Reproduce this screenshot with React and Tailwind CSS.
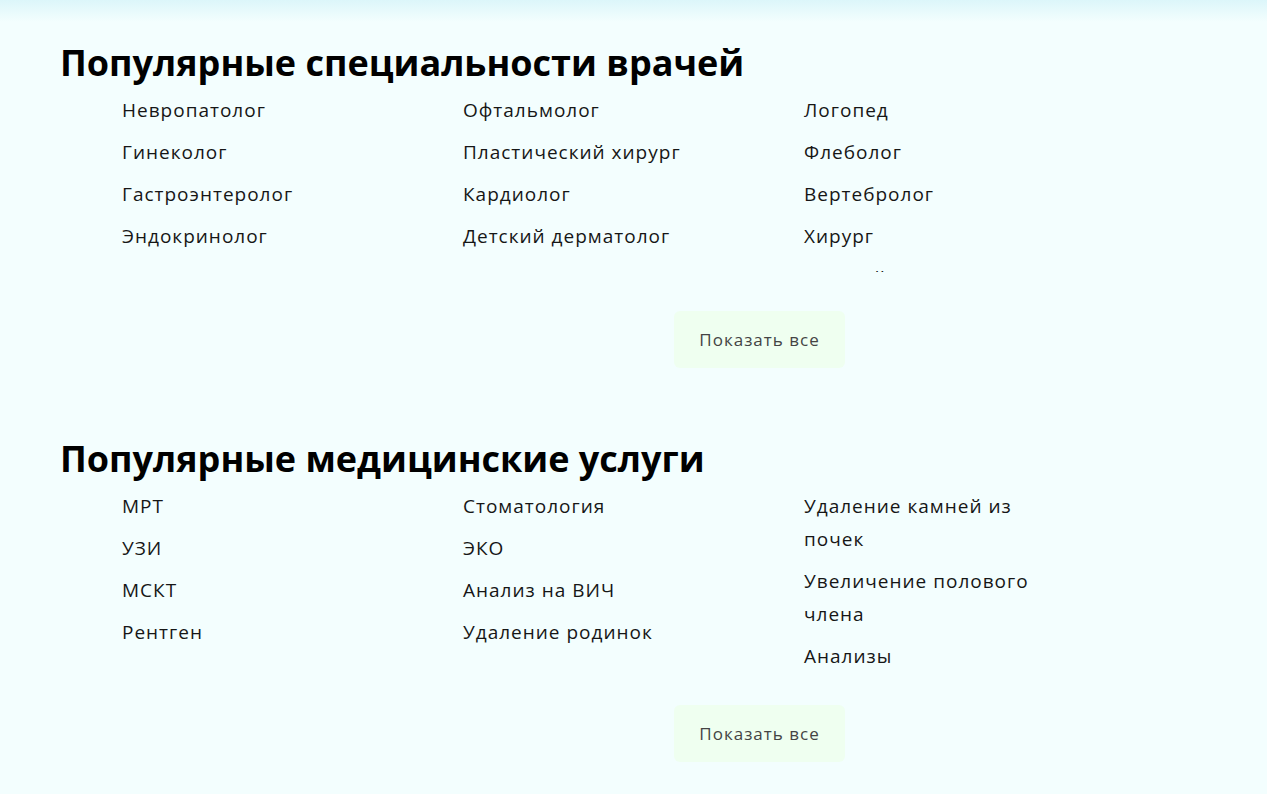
import React from 'react';

const specialties = [
  ['Невропатолог', 'Гинеколог', 'Гастроэнтеролог', 'Эндокринолог', 'Невролог', 'Уролог'],
  ['Офтальмолог', 'Пластический хирург', 'Кардиолог', 'Детский дерматолог', 'Маммолог', 'Терапевт'],
  ['Логопед', 'Флеболог', 'Вертебролог', 'Хирург', 'Детский хирург', 'Психолог'],
];

const services = [
  ['МРТ', 'УЗИ', 'МСКТ', 'Рентген'],
  ['Стоматология', 'ЭКО', 'Анализ на ВИЧ', 'Удаление родинок'],
  ['Удаление камней из почек', 'Увеличение полового члена', 'Анализы'],
];

function Section({ title, columns, clipped }) {
  return (
    <section className="pl-[60px]">
      <h2 className="text-[36px] leading-[44px] font-bold text-black">{title}</h2>
      <div className={'flex pl-[62px] mt-[9px] ' + (clipped ? 'h-[178px] overflow-hidden' : '')}>
        {columns.map((col, i) => (
          <ul key={i} className="w-[341px] flex flex-col gap-[9px]">
            {col.map((item) => (
              <li key={item} className="max-w-[236px] text-[19px] leading-[33px] tracking-[1px] text-[#161616]">
                {item}
              </li>
            ))}
          </ul>
        ))}
      </div>
      <div className={'flex pl-[614px] ' + (clipped ? 'mt-[39px]' : 'mt-[32px]')}>
        <button className="h-[57px] w-[171px] rounded-[6px] bg-[#effff0] text-[17px] tracking-[1px] text-[#444]">
          Показать все
        </button>
      </div>
    </section>
  );
}

export default function App() {
  return (
    <div
      className="min-h-[794px] bg-[linear-gradient(to_bottom,#dcf6fa_0px,#f3fefe_22px,#f3fefe_100%)] pt-[41px] pb-[40px]"
      style={{ fontFamily: '"Open Sans", sans-serif' }}
    >
      <Section title="Популярные специальности врачей" columns={specialties} clipped />
      <div className="h-[69px]" />
      <Section title="Популярные медицинские услуги" columns={services} />
    </div>
  );
}
